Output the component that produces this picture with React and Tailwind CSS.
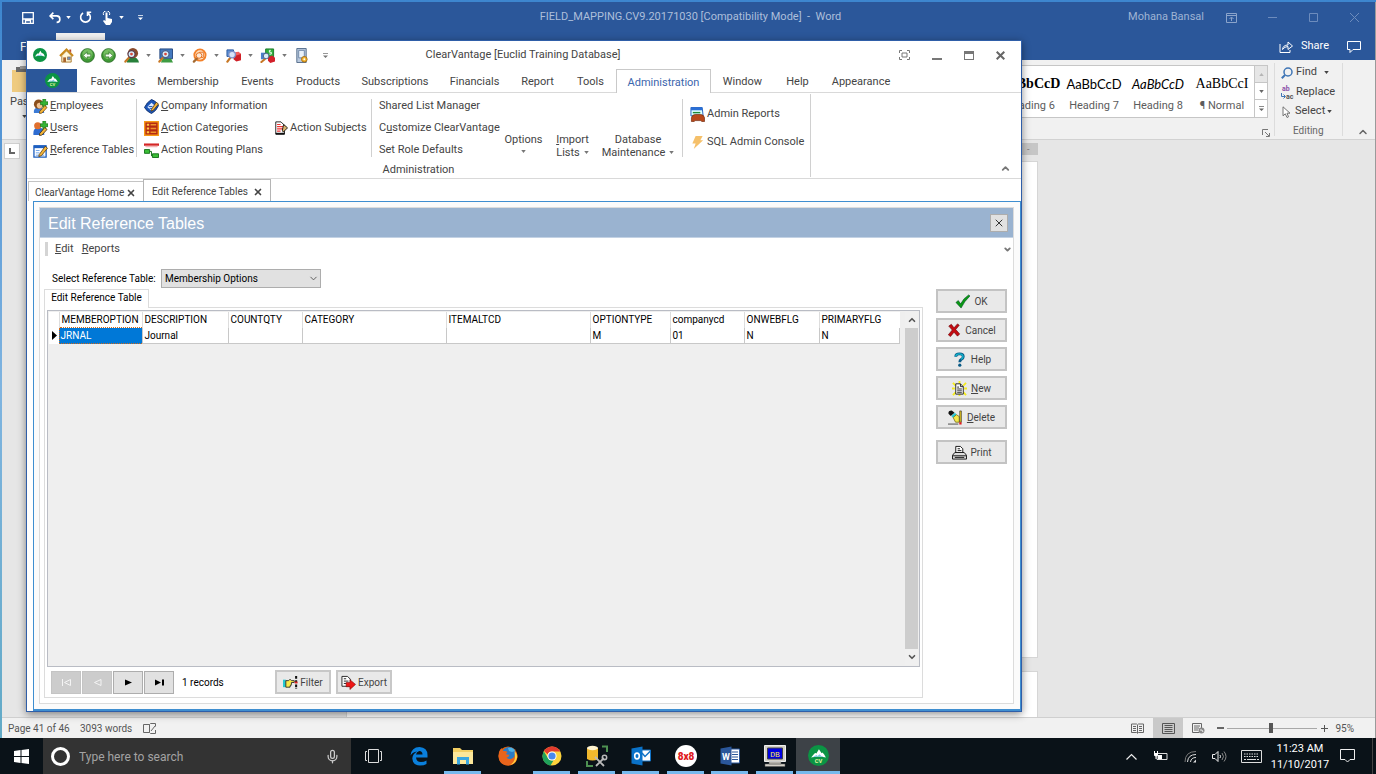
import React, { useState } from "react";
import clsx from "clsx";
import { ChevronDown, ChevronUp, Mic, X } from "lucide-react";

const ribbonTabs = [
  { label: "Favorites", width: "w-[66px]" },
  { label: "Membership", width: "w-[84px]" },
  { label: "Events", width: "w-[55px]" },
  { label: "Products", width: "w-[66px]" },
  { label: "Subscriptions", width: "w-[88px]" },
  { label: "Financials", width: "w-[71px]" },
  { label: "Report", width: "w-[55px]" },
  { label: "Tools", width: "w-[51px]" },
  { label: "Administration", width: "w-[95px]" },
  { label: "Window", width: "w-[63px]" },
  { label: "Help", width: "w-[47px]" },
  { label: "Appearance", width: "w-[80px]" },
];

const columns = [
  { name: "MEMBEROPTION", value: "JRNAL", width: "w-[83px]" },
  { name: "DESCRIPTION", value: "Journal", width: "w-[86px]" },
  { name: "COUNTQTY", value: "", width: "w-[74px]" },
  { name: "CATEGORY", value: "", width: "w-[144px]" },
  { name: "ITEMALTCD", value: "", width: "w-[144px]" },
  { name: "OPTIONTYPE", value: "M", width: "w-[80px]" },
  { name: "companycd", value: "01", width: "w-[74px]" },
  { name: "ONWEBFLG", value: "N", width: "w-[75px]" },
  { name: "PRIMARYFLG", value: "N", width: "w-[80px]" },
];

/* ---------- shared bits ---------- */

function Key({ text, at = 0 }) {
  return (
    <span>
      {text.slice(0, at)}
      <u>{text[at]}</u>
      {text.slice(at + 1)}
    </span>
  );
}

function Caret({ className }) {
  return (
    <svg viewBox="0 0 6 4" className={clsx("h-[3px] w-[5px] shrink-0 fill-current", className)}>
      <path d="M0 0h6L3 4z" />
    </svg>
  );
}

function BarCaret({ className }) {
  return (
    <svg viewBox="0 0 6 6" className={clsx("h-[5px] w-[5px] shrink-0 fill-current", className)}>
      <path d="M0 0h6v1H0zM0 3h6L3 6z" />
    </svg>
  );
}

function Svg({ children, className = "h-[15px] w-[15px]", box = "0 0 16 16" }) {
  return (
    <svg viewBox={box} className={clsx("shrink-0", className)} fill="none">
      {children}
    </svg>
  );
}

/* ---------- ClearVantage icons ---------- */

function CvLogo({ className, label }) {
  return (
    <Svg className={className} box="0 0 20 20">
      <circle cx="10" cy="10" r="10" fill="#0b9444" />
      <path d="M3 12Q6 7.500 7.200 7.500L8 8.200 10.400 4l2.600 3.800.8-.6Q15.500 8.500 17 12q-7-2-14 0z" fill="#fff" />
      <path d="M4.500 11.600 8 9.500l1.200 1L11 8.800l2 1.900 2.500.9q-5.500-1.200-11 0z" fill="#7cc7e8" />
      {label && (
        <text x="10" y="17.500" fontSize="5.500" fontWeight="700" textAnchor="middle" fill="#e8f5a0">
          CV
        </text>
      )}
    </Svg>
  );
}

const HomeIcon = () => (
  <Svg>
    <path d="M3 8v7h10V8L8 3z" fill="#fff8dc" stroke="#a9782b" />
    <path d="M1 8.500 8 1.500l7 7" stroke="#c98a1b" strokeWidth="2" />
    <path d="M11 1.500h2V5l-2-2z" fill="#b5452c" />
    <path d="M4.500 10h3v5h-3z" fill="#a8632a" />
    <path d="M9 9.500h3v3H9z" fill="#6e93c9" stroke="#845b24" strokeWidth=".6" />
  </Svg>
);

const ArrowBall = ({ flip }) => (
  <Svg>
    <circle cx="8" cy="8" r="7.300" fill="#3f9a35" stroke="#2c6e26" />
    <circle cx="8" cy="6.500" r="5.500" fill="#8ccd74" opacity=".7" />
    <path
      d={flip ? "M12.500 8 8.500 4v2.500H4.500v3h4V12z" : "M3.500 8l4-4v2.500h4v3h-4V12z"}
      fill="#f4fbf1"
      stroke="#2d7327"
      strokeWidth=".8"
    />
  </Svg>
);

const Lens = ({ ring = "#4b5f8a" }) => (
  <>
    <path d="M1.500 14.500 5.500 10" stroke="#c77724" strokeWidth="2.400" strokeLinecap="round" />
    <circle cx="8" cy="6.500" r="3.800" fill="#d8ecf8" stroke={ring} strokeWidth="1.300" />
  </>
);

const FindPerson = () => (
  <Svg>
    <path d="M3 15.500q0-6 6-6t7 6z" fill="#27803a" />
    <circle cx="9.500" cy="5.500" r="5.500" fill="#8a4a2b" />
    <Lens ring="#5a3a48" />
    <circle cx="8" cy="6.500" r="1.500" fill="#d9483b" />
  </Svg>
);

const FindScreen = () => (
  <Svg>
    <path d="M2 1h13.500v10.500H2z" fill="#4479bf" stroke="#23487e" />
    <path d="M5 11.500h9l2 4H3z" fill="#3e9c42" />
    <Lens />
    <circle cx="8" cy="6.500" r="1.500" fill="#d9483b" />
  </Svg>
);

const FindOrange = () => (
  <Svg>
    <circle cx="8.500" cy="7.500" r="7" fill="#f3812a" />
    <circle cx="8.500" cy="7.500" r="5" fill="#ffe3c4" />
    <path d="M8 4.500h4V10H8z" fill="#fff" stroke="#e36d1b" />
    <path d="M2 14.500 5.500 11" stroke="#a56a31" strokeWidth="2.400" strokeLinecap="round" />
    <circle cx="7.500" cy="8" r="3" fill="#fde9d6" stroke="#e36d1b" />
  </Svg>
);

const FindBoxes = () => (
  <Svg>
    <path d="M1 2h7v7H1z" fill="#5c8fd6" stroke="#2d5a9f" />
    <path d="M8 5.500l5-1.500 3 2.500V13l-5 1.500L8 12z" fill="#cf2027" />
    <path d="M8 5.500l5-1.500 3 2.500L11 8z" fill="#f0625f" />
    <path d="M1.500 14.500 4.500 10.500" stroke="#c77724" strokeWidth="2.400" strokeLinecap="round" />
    <circle cx="6.500" cy="7" r="3.500" fill="#d8e4f8" stroke="#7a90c8" strokeWidth="1.300" />
  </Svg>
);

const FindMoney = () => (
  <Svg>
    <path d="M6 1h8.500v8.500H6z" fill="#2fae3c" stroke="#1b7a29" />
    <path d="M11.500 2.500H10v2h2v2h-2" stroke="#fff" />
    <path d="M8.500 9.500 13 8l3 2.500v4L11 16l-2.500-2.500z" fill="#d3202a" />
    <path d="M1 5h5v7H1z" fill="#4a80cc" />
    <path d="M1.500 15 5 12" stroke="#c77724" strokeWidth="2.200" strokeLinecap="round" />
    <circle cx="6.500" cy="8.500" r="3" fill="#d8ecf8" stroke="#4b5f8a" />
  </Svg>
);

const ServerGear = () => (
  <Svg>
    <path d="M3 .5h10v15H3z" fill="#b9c9dd" stroke="#536b8a" />
    <path d="M5 2.500h6v8H5z" fill="#e9f1fa" stroke="#6f88a8" />
    <circle cx="11" cy="12" r="3" fill="#f2b431" stroke="#a86f12" />
    <circle cx="11" cy="12" r="1" fill="#fff" />
  </Svg>
);

const EmployeesIcon = () => (
  <Svg>
    <path d="M1 15q-1-6 5-6t6 6z" fill="#3c7bd6" />
    <circle cx="6" cy="5.500" r="5" fill="#8b4f1d" />
    <circle cx="7" cy="7" r="3" fill="#f2c391" />
    <path d="M10.500 0h3v3H16v3h-2.500v3h-3V6H8V3h2.500z" fill="#35b435" stroke="#187418" strokeWidth=".7" />
    <path d="M7 13.500 12.500 7 15 9l-5.500 6L7 15.500z" fill="#f4b53a" stroke="#6b430d" strokeWidth=".8" />
  </Svg>
);

const UsersIcon = () => (
  <Svg>
    <path d="M.5 15q-1-8 5.500-8t6 8z" fill="#2e6cd1" />
    <circle cx="5" cy="5" r="3.800" fill="#e0702f" />
    <path d="M10.500 0h3v3H16v3h-2.500v3h-3V6H8V3h2.500z" fill="#35b435" stroke="#187418" strokeWidth=".7" />
    <path d="M7 13.500 12.500 7 15 9l-5.500 6L7 15.500z" fill="#f4b53a" stroke="#38240a" strokeWidth=".8" />
  </Svg>
);

const RefTableIcon = () => (
  <Svg>
    <path d="M1 3h13v12H1z" fill="#fff" stroke="#1d5fc0" strokeWidth="1.400" />
    <path d="M1 2.500h13v3H1z" fill="#1d5fc0" />
    <path d="M3 8h4M3 10.500h4M3 13h4M9 13h3" stroke="#6aa0e6" />
    <path d="M6.500 12.500 13 3.500l2.500 2-6.500 8-2.800 1z" fill="#f4b53a" stroke="#4e3510" strokeWidth=".8" />
  </Svg>
);

const CompanyIcon = () => (
  <Svg>
    <path d="M8 .5Q13 2 15.500 7 13 13 8 15.500 3 13.500.5 9 3 3.500 8 .5z" fill="#1c56b8" stroke="#0d2e6e" />
    <path d="M3.500 8.500 8 4l4 3.500-4 5z" fill="#dbe9ff" />
    <path d="M5 8h4M6 10h3" stroke="#1c56b8" />
    <path d="M8 11 13 3.500l2.500 1.800L10 12l-2.500 1z" fill="#f4b53a" stroke="#4e3510" strokeWidth=".8" />
  </Svg>
);

const CategoriesIcon = () => (
  <Svg>
    <path d="M.7.7h14.600v14.600H.7z" fill="#b52a12" stroke="#f79a17" strokeWidth="1.600" />
    <path d="M3 4h2.500M3 8h2.500M3 12h2.500" stroke="#ffc845" strokeWidth="2" />
    <path d="M7 4h6M7 8h6M7 12h6" stroke="#f0922b" strokeWidth="1.600" />
  </Svg>
);

const RoutingIcon = () => (
  <Svg>
    <path d="M0 .5h16v2.500H0z" fill="#d42626" />
    <path d="M1 3h14l-1 1.500H2z" fill="#f3b5b5" />
    <path d="M.5 7h5.500v4H.5z" fill="#3bbf37" stroke="#14701a" />
    <path d="M9 11.500h6.500v4H9z" fill="#3bbf37" stroke="#14701a" />
    <path d="M6 9h2v5" stroke="#14701a" />
  </Svg>
);

const SubjectsIcon = () => (
  <Svg className="h-[14px] w-[14px]">
    <path d="M2 1h6l4 4v10H2z" fill="#fff" stroke="#111" />
    <path d="M3.500 4h4M3.500 6.500h7M3.500 9h7M3.500 11.500h4" stroke="#e33" strokeWidth="1.300" />
    <path d="M2 14.500h10" stroke="#111" strokeWidth="2" />
    <path d="M9.500 10.500 11 4l4.500 3.800-5 5z" fill="#d8b26c" stroke="#111" />
  </Svg>
);

const ReportsIcon = () => (
  <Svg>
    <path d="M1 .5h12l1 9H1z" fill="#dff" stroke="#1d5fc0" />
    <path d="M1 .5h12v3H1z" fill="#2a6fd6" />
    <path d="M3 6h8" stroke="#1e8a3a" strokeWidth="1.500" />
    <path d="M1.500 11.500Q2.500 8 5.500 8h6q3 0 4 3.500v4h-3l-1-1h-6l-1 1h-3z" fill="#b8481a" stroke="#6e260a" strokeWidth=".7" />
  </Svg>
);

const BoltIcon = () => (
  <Svg>
    <path d="M6 1h7.500L11 5.500h3L4 15l2-6H2.500z" fill="#f5c06a" />
  </Svg>
);

const CheckIcon = () => (
  <Svg>
    <path d="M1 9l2.500-2L6 10.500Q9 4.500 14.500 1L16 2Q10 7.500 6.500 15z" fill="#0a9a12" stroke="#064f2a" strokeWidth=".6" />
  </Svg>
);

const CrossIcon = () => (
  <Svg className="h-[14px] w-[14px]">
    <path d="M2 3.500 5 1.500l3 4L12 1l2 1.500-4 5 4.500 5L12 15l-4-4.500L4 15.500l-2.500-2L6 8z" fill="#c40a10" stroke="#6b070a" strokeWidth=".7" />
  </Svg>
);

const QuestionIcon = () => (
  <Svg>
    <path d="M4 5q0-3 4-3t4 3q0 2-2.200 3Q8.300 8.800 8.300 11" stroke="#0a5a86" strokeWidth="3" />
    <path d="M4 4.800Q4.200 2 7.800 2t4 3q0 1.800-2 2.800" stroke="#14b4cc" strokeWidth="1.500" />
    <circle cx="8.300" cy="14" r="1.700" fill="#0a5a86" />
  </Svg>
);

const NewDocIcon = () => (
  <Svg>
    <path d="M1 2l3 3M8 0v3M15 2l-3 3M0 8h3M13 8h3M1 15l3-3M15 15l-3-3M8 13v3" stroke="#f5ec1d" strokeWidth="2" />
    <path d="M4 3h5l3 3v8H4z" fill="#fff" stroke="#222" />
    <path d="M9 3v3h3M5.500 6.500h2M5.500 8.500h5M5.500 10.500h5M5.500 12.500h5" stroke="#222" />
  </Svg>
);

const EraserIcon = () => (
  <Svg>
    <path d="M.5 4Q0 .5 4 .5L7 3 3 6.500z" fill="#111" />
    <path d="M3.500 6.500 7.500 3 9 5 5.500 8.500z" fill="#28c8d8" />
    <path d="M5.500 8 9 5l3 2v6H8z" fill="#f4e84a" stroke="#6d6410" strokeWidth=".8" />
    <path d="M12.500 1h1.800v12h-1.800z" fill="#e6c81e" stroke="#222" strokeWidth=".6" />
    <path d="M12 13h2.500v2.500H12z" fill="#e02020" />
    <path d="M0 15h11" stroke="#444" />
  </Svg>
);

const PrinterIcon = () => (
  <Svg>
    <path d="M4 8V1.500h5L11.500 4v4" fill="#fff" stroke="#111" />
    <path d="M6 4h2.500M6 6h4" stroke="#111" />
    <path d="M3 8h10l2.500 3v4H.5v-4z" fill="#ddd" stroke="#111" />
    <path d="M.5 11.500h15M3 13.200h10" stroke="#111" />
  </Svg>
);

const FilterIcon = () => (
  <Svg>
    <path d="M0 5h3v8H0z" fill="#23c8d2" />
    <path d="M3 6h3l1.500-1.500L9 6h3v2H9v2H8.500v1.500H7.500V13H3z" fill="#f8ea4a" stroke="#222" strokeWidth=".9" />
    <path d="M14 1v14" stroke="#111" strokeWidth="2.200" strokeDasharray="3 1.500" />
    <path d="M12.500 7h3v2h-3z" fill="#e02020" />
  </Svg>
);

const ExportIcon = () => (
  <Svg>
    <path d="M1 1.500h6l3 3V12H1z" fill="#fff" stroke="#222" />
    <path d="M3 4h2.500M3 6.500h5M3 9h3" stroke="#222" />
    <path d="M5.500 8h4V5l6 5-6 5.500v-3h-4z" fill="#ee1616" stroke="#7a0808" strokeWidth=".6" />
  </Svg>
);

/* ---------- Word window ---------- */

function WordTitleBar() {
  return (
    <header className="flex h-[31px] items-center bg-[#2b579a] text-white">
      <div className="flex flex-1 items-center pl-5">
        <button aria-label="Save">
          <Svg className="h-3 w-3" box="0 0 12 12">
            <path d="M.7.7h10.600v10.600H.7zM1 7h10M3.500 11V8.500h5V11" stroke="#fff" strokeWidth="1.300" />
          </Svg>
        </button>
        <button aria-label="Undo" className="ml-3.5 flex items-center gap-1">
          <Svg className="h-[13px] w-[14px]">
            <path d="M6 2 2 6l4 4M2.500 6H10q4 .2 4 4t-4 4" stroke="#fff" strokeWidth="2" />
          </Svg>
          <Caret />
        </button>
        <button aria-label="Repeat" className="ml-2">
          <Svg className="h-[13px] w-[13px]">
            <path d="M5 2.500a6 6 0 1 0 6 0M15 1.500h-4.500V6" stroke="#fff" strokeWidth="2" />
          </Svg>
        </button>
        <button aria-label="Touch mode" className="ml-2.5 flex items-center gap-1.5">
          <Svg className="h-[14px] w-[11px]" box="0 0 11 14">
            <path d="M3.500 1.500h2v5.500l4.500 1v3L8 14H4L1 10l1-1 1.500 1z" fill="#fff" />
            <path d="M1.500 4a3.200 3.200 0 1 1 6 0" stroke="#fff" />
          </Svg>
          <Caret />
        </button>
        <button aria-label="Customize" className="ml-3.5">
          <BarCaret />
        </button>
      </div>
      <h1 className="text-[11px] whitespace-pre text-[#adbfdb]">FIELD_MAPPING.CV9.20171030 [Compatibility Mode]  -  Word</h1>
      <div className="flex flex-1 items-center justify-end pr-4 text-[#9fb4d4]">
        <span className="text-[11px]">Mohana Bansal</span>
        <Svg className="ml-[22px] h-[10px] w-[11px]" box="0 0 11 10">
          <path d="M.5.5h10v9H.5zM.5 2.500h10M5.500 8V4.500M3.500 6l2-2 2 2" stroke="#8ba4cb" />
        </Svg>
        <Svg className="ml-[31px] h-[10px] w-[9px]" box="0 0 9 10">
          <path d="M0 4.500h9" stroke="#6d8cbd" />
        </Svg>
        <Svg className="ml-8 h-[9px] w-[9px]" box="0 0 9 9">
          <path d="M.5.500h8v8h-8z" stroke="#6d8cbd" />
        </Svg>
        <Svg className="ml-8 h-[9px] w-[9px]" box="0 0 9 9">
          <path d="M0 0l9 9M9 0 0 9" stroke="#6d8cbd" />
        </Svg>
      </div>
    </header>
  );
}

function WordTabRow() {
  return (
    <div className="flex h-[27px] items-stretch bg-[#2b579a] text-xs text-white">
      <button className="w-[54px] pl-[18px] text-left">File</button>
      <div className="w-[49px] bg-[#f1f1f1]" />
      <div className="ml-auto flex items-center pr-3.5">
        <button className="flex items-center gap-2 text-[11px]">
          <Svg className="h-3 w-[14px]" box="0 0 14 12">
            <path d="M1 3v8.500h10V9M3.500 8.500Q4 4 9 4V1l4.500 4L9 8.500v-3Q5.500 5.500 3.500 8.500z" stroke="#fff" />
          </Svg>
          Share
        </button>
        <button aria-label="Comments" className="ml-[18px]">
          <Svg className="h-3 w-[14px]" box="0 0 14 12">
            <path d="M.5.5h13v8H6l-3 3v-3H.5z" stroke="#fff" />
          </Svg>
        </button>
      </div>
    </div>
  );
}

function StyleItem({ name, sample }) {
  return (
    <button className="flex w-16 flex-col items-center justify-center gap-1.5 overflow-hidden pt-1.5 text-[11px] leading-4 whitespace-nowrap text-[#5c5c5c]">
      {sample}
      <span>{name}</span>
    </button>
  );
}

function WordRibbon() {
  return (
    <div className="flex h-20 justify-between border-b border-[#d2d2d2] bg-[#f1f1f1] text-[11px] text-[#444]">
      <button className="flex w-12 flex-col items-center pt-1.5 pr-1">
        <Svg className="h-[26px] w-[26px]" box="0 0 26 26">
          <path d="M1 4h24v22H1z" fill="#efcb80" />
          <path d="M5 1h16v5H5z" fill="#6b6b6b" />
          <path d="M9 0h8v3H9z" fill="#999" />
        </Svg>
        <span className="mt-0.5">Paste</span>
        <Caret className="mt-1" />
      </button>
      <div className="flex">
        <div className="flex pt-[5px]">
          <div className="flex h-[53px] border border-[#c6c6c6] bg-white">
            <StyleItem name="Heading 6" sample={<b className="font-['Liberation_Serif',serif] text-sm leading-4 text-black">AaBbCcD</b>} />
            <StyleItem name="Heading 7" sample={<span className="font-[Lato,sans-serif] text-[13px] leading-4 text-black">AaBbCcD</span>} />
            <StyleItem name="Heading 8" sample={<i className="font-[Lato,sans-serif] text-[13px] leading-4 text-black">AaBbCcD</i>} />
            <StyleItem name="¶ Normal" sample={<span className="font-['Liberation_Serif',serif] text-sm leading-4 text-black">AaBbCcI</span>} />
            <div className="grid w-[13px] grid-rows-3 divide-y divide-[#c6c6c6] border-l border-[#c6c6c6] text-[#666]">
              <button aria-label="Row up" className="flex items-center justify-center bg-[#e6e6e6] text-[#b5b5b5]">
                <Caret className="rotate-180" />
              </button>
              <button aria-label="Row down" className="flex items-center justify-center">
                <Caret />
              </button>
              <button aria-label="More styles" className="flex items-center justify-center">
                <BarCaret />
              </button>
            </div>
          </div>
        </div>
        <div className="flex items-end pr-1 pb-0.5">
          <Svg className="-ml-1.5 h-2 w-2" box="0 0 8 8">
            <path d="M.5 6V.5H6M3 3l4 4M7.500 4v3.500H4" stroke="#777" />
          </Svg>
        </div>
        <div className="my-[3px] flex w-[69px] flex-col border-x border-[#dcdcdc] pl-1.5">
          <button className="flex h-[19px] shrink-0 items-center gap-[3px]">
            <Svg className="h-3 w-3" box="0 0 12 12">
              <circle cx="7" cy="5" r="4" stroke="#3f75b5" strokeWidth="1.500" />
              <path d="M.8 11.200 4 8" stroke="#3f75b5" strokeWidth="2" />
            </Svg>
            Find
            <Caret className="ml-1" />
          </button>
          <button className="flex h-5 shrink-0 items-center gap-px">
            <Svg className="h-[18px] w-[14px]" box="0 0 14 18">
              <text x="1" y="8" fontSize="7" fontWeight="700" fill="#8a4fa8">ab</text>
              <text x="5" y="16" fontSize="7" fontWeight="700" fill="#555">ac</text>
              <path d="M.5 10v3.500H4M2.500 11.500l2 2-2 2" stroke="#3f75b5" />
            </Svg>
            Replace
          </button>
          <button className="flex h-[19px] shrink-0 items-center gap-1">
            <Svg className="ml-px h-3 w-[9px]" box="0 0 9 12">
              <path d="M1 .8v9l2.300-2L5 11.500l1.500-.7L5 7.200h3z" fill="#fff" stroke="#666" strokeWidth=".9" />
            </Svg>
            Select
            <Caret className="-ml-0.5" />
          </button>
          <span className="mt-auto pl-3 text-[10px] leading-[10px] text-[#666]">Editing</span>
        </div>
        <button aria-label="Collapse the ribbon" className="flex w-8 items-end justify-end pr-1.5 pb-px">
          <ChevronUp className="h-3 w-3 text-[#666]" strokeWidth={3} />
        </button>
      </div>
    </div>
  );
}

function WordDocument() {
  return (
    <div className="flex min-h-0 flex-1 bg-[#e6e6e6] pt-[3px] pl-0.5">
      <div className="flex h-4 w-4 items-end justify-end border border-[#cfcfcf] bg-white p-1">
        <div className="h-1.5 w-1.5 border-b-2 border-l-2 border-[#666]" />
      </div>
      <div className="flex flex-1 flex-col items-center pr-3">
        <div className="flex min-h-0 w-[692px] flex-1 flex-col">
          <div className="h-3 shrink-0 bg-[#c6c6c6] pr-2 text-right text-[9px] leading-3 text-[#777]">-</div>
          <div className="mt-[6px] flex-1 border border-[#d6d6d6] bg-white" />
          <div className="mt-[13px] h-[46px] border border-b-0 border-[#d6d6d6] bg-white" />
        </div>
      </div>
    </div>
  );
}

function WordStatusBar() {
  return (
    <footer className="flex h-[21px] items-center border-t border-[#cfcfcf] bg-[#f1f1f1] pl-1.5 text-[10px] text-[#555]">
      <span className="w-[72px]">Page 41 of 46</span>
      <span className="w-[63px]">3093 words</span>
      <Svg className="h-[11px] w-[13px]" box="0 0 13 11">
        <path d="M6.500 1.500H.5v8h6v-8l1-1h5v3M6.500 9.500l1 1h5V7M8 8l4-5" stroke="#666" />
      </Svg>
      <div className="ml-auto flex h-full items-center pr-[21px]">
        <button aria-label="Read mode" className="mr-[9px]">
          <Svg className="h-[11px] w-[13px]" box="0 0 13 11">
            <path d="M.5 1h5l1 .8 1-.8h5v8.500h-5l-1 .8-1-.8h-5zM6.500 2v8M2 3.500h3M2 5.500h3M2 7.500h3M8 3.500h3M8 5.500h3M8 7.500h3" stroke="#666" />
          </Svg>
        </button>
        <button aria-label="Print layout" className="flex h-full w-[30px] items-center justify-center bg-[#c9c9c9]">
          <Svg className="h-[11px] w-[13px]" box="0 0 13 11">
            <path d="M.5.500h12v10H.5zM2.500 2.500h8M2.500 4.500h8M2.500 6.500h8M2.500 8.500h8" stroke="#555" />
          </Svg>
        </button>
        <button aria-label="Web layout" className="mr-2 ml-[9px]">
          <Svg className="h-[11px] w-[13px]" box="0 0 13 11">
            <path d="M7 9.500H.5v-9h9V5M2 3h6M2 5h5M2 7h4" stroke="#666" />
            <circle cx="9.500" cy="7.500" r="3" fill="#888" />
            <path d="M8 7h2l1 2" stroke="#eee" />
          </Svg>
        </button>
        <button aria-label="Zoom out" className="flex w-[14px] justify-center">
          <span className="h-0.5 w-[7px] bg-[#666]" />
        </button>
        <input
          type="range"
          aria-label="Zoom"
          defaultValue="48"
          className="h-[11px] w-[90px] appearance-none bg-[linear-gradient(#a8a8a8,#a8a8a8)] bg-[length:100%_1px] bg-center bg-no-repeat [&::-webkit-slider-thumb]:h-[10px] [&::-webkit-slider-thumb]:w-1 [&::-webkit-slider-thumb]:appearance-none [&::-webkit-slider-thumb]:bg-[#555]"
        />
        <button aria-label="Zoom in" className="flex w-[14px] justify-center">
          <Svg className="h-[7px] w-[7px]" box="0 0 7 7">
            <path d="M3.500 0v7M0 3.500h7" stroke="#555" />
          </Svg>
        </button>
        <span className="ml-1">95%</span>
      </div>
    </footer>
  );
}

/* ---------- ClearVantage window ---------- */

const quickFinders = [
  { label: "Find person", icon: FindPerson },
  { label: "Find screen", icon: FindScreen },
  { label: "Find event", icon: FindOrange },
  { label: "Find product", icon: FindBoxes },
  { label: "Find payment", icon: FindMoney },
];

function CvTitleBar() {
  return (
    <div className="flex h-7 items-center pl-1.5 text-[#777]">
      <div className="flex flex-1 items-center">
        <CvLogo className="h-[14px] w-[14px]" />
        <button aria-label="Home" className="ml-3">
          <HomeIcon />
        </button>
        <button aria-label="Back" className="ml-1.5">
          <ArrowBall />
        </button>
        <button aria-label="Forward" className="mr-2 ml-1.5">
          <ArrowBall flip />
        </button>
        {quickFinders.map(({ label, icon: Icon }) => (
          <button key={label} aria-label={label} className="flex w-[34px] items-center gap-[7px]">
            <Icon />
            <Caret />
          </button>
        ))}
        <button aria-label="Server options">
          <ServerGear />
        </button>
        <button aria-label="Customize toolbar" className="ml-3.5">
          <BarCaret />
        </button>
      </div>
      <h2 className="ml-2 text-[11px] text-[#444]">ClearVantage [Euclid Training Database]</h2>
      <div className="flex flex-1 items-center justify-end gap-[22px] pr-4">
        <button aria-label="Full screen">
          <Svg className="h-[10px] w-[11px]" box="0 0 11 10">
            <path d="M.5 3V.5H3M8 .5h2.500V3M10.500 7v2.500H8M3 9.500H.5V7M3 3h5v4H3z" stroke="#777" />
          </Svg>
        </button>
        <button aria-label="Minimize" className="flex h-[9px] w-[10px] items-end">
          <span className="h-0.5 w-full bg-[#777]" />
        </button>
        <button aria-label="Maximize">
          <div className="h-[9px] w-[10px] border border-t-[3px] border-[#777]" />
        </button>
        <button aria-label="Close">
          <Svg className="h-[9px] w-[9px]" box="0 0 9 9">
            <path d="M.7.7l7.600 7.600M8.300.7.7 8.300" stroke="#666" strokeWidth="2" />
          </Svg>
        </button>
      </div>
    </div>
  );
}

function CvRibbonTabs() {
  return (
    <nav className="flex h-6 border-b border-[#d9d9d9] text-[11px] text-[#444]">
      <button aria-label="Application menu" className="mr-[3px] flex w-[50px] items-center justify-center bg-[#2b579a]">
        <CvLogo className="h-[15px] w-[15px]" label />
      </button>
      {ribbonTabs.map(({ label, width }) => (
        <button
          key={label}
          className={clsx(
            "flex items-center justify-center pt-1 whitespace-nowrap",
            width,
            label === "Administration" && "-mb-px border border-b-0 border-[#c9c9c9] bg-white text-[#3b66ad]"
          )}
        >
          {label}
        </button>
      ))}
    </nav>
  );
}

function RibbonItem({ icon: Icon, children }) {
  return (
    <button className="flex h-[22px] items-center gap-0.5 whitespace-nowrap">
      {Icon && <Icon />}
      {children}
    </button>
  );
}

function CvRibbon() {
  return (
    <div className="flex h-[86px] border-b border-[#d9d9d9] text-[11px] text-[#444]">
      <div className="my-px flex w-[784px] flex-col border-r border-[#d0d0d0] pt-px">
        <div className="flex h-[66px] items-stretch">
          <div className="flex w-[103px] flex-col pl-1.5">
            <RibbonItem icon={EmployeesIcon}><Key text="Employees" /></RibbonItem>
            <RibbonItem icon={UsersIcon}><Key text="Users" /></RibbonItem>
            <RibbonItem icon={RefTableIcon}><Key text="Reference Tables" /></RibbonItem>
          </div>
          <div className="my-1 ml-1.5 w-px bg-[#d0d0d0]" />
          <div className="flex w-[137px] flex-col pl-[7px]">
            <RibbonItem icon={CompanyIcon}><Key text="Company Information" /></RibbonItem>
            <RibbonItem icon={CategoriesIcon}><Key text="Action Categories" /></RibbonItem>
            <RibbonItem icon={RoutingIcon}>Action Routing Plans</RibbonItem>
          </div>
          <div className="flex w-[97px] flex-col justify-center">
            <RibbonItem icon={SubjectsIcon}>Action Subjects</RibbonItem>
          </div>
          <div className="my-1 w-px bg-[#d0d0d0]" />
          <div className="flex w-[124px] flex-col pl-[7px]">
            <RibbonItem>Shared List Manager</RibbonItem>
            <RibbonItem><Key text="Customize ClearVantage" at={1} /></RibbonItem>
            <RibbonItem>Set Role Defaults</RibbonItem>
          </div>
          <button className="flex w-[55px] flex-col items-center pt-[38px] leading-[13px]">
            Options
            <Caret className="mt-1 text-[#777]" />
          </button>
          <button className="flex w-[43px] flex-col items-center pt-[38px] leading-[13px]">
            <Key text="Import" />
            <span className="flex items-center justify-center gap-1">
              Lists <Caret className="text-[#777]" />
            </span>
          </button>
          <button className="flex w-[88px] flex-col items-center pt-[38px] leading-[13px]">
            Database
            <span className="flex items-center justify-center gap-1">
              Maintenance <Caret className="text-[#777]" />
            </span>
          </button>
          <div className="my-1 w-px bg-[#d0d0d0]" />
          <div className="flex flex-col gap-1.5 pt-2 pl-[7px]">
            <RibbonItem icon={ReportsIcon}>Admin Reports</RibbonItem>
            <RibbonItem icon={BoltIcon}>SQL Admin Console</RibbonItem>
          </div>
        </div>
        <div className="text-center leading-[17px]">Administration</div>
      </div>
      <button aria-label="Collapse" className="ml-auto flex items-end pr-2.5 pb-1">
        <ChevronUp className="h-[11px] w-[11px] text-[#777]" strokeWidth={4} />
      </button>
    </div>
  );
}

function CvDocTabs() {
  return (
    <div className="flex h-[22px] items-end px-px text-[10px] whitespace-nowrap text-[#444]">
      <div className="flex h-[20px] w-[115px] items-center justify-between border border-r-0 border-b-0 border-[#c4c4c4] pt-0.5 pr-[7px] pl-1.5">
        <button>ClearVantage Home</button>
        <button aria-label="Close ClearVantage Home">
          <X className="h-[10px] w-[10px]" strokeWidth={4} />
        </button>
      </div>
      <div className="flex h-full w-[128px] items-center justify-between border border-b-0 border-[#b5b5b5] bg-white pt-0.5 pr-[7px] pl-[8px]">
        <button>Edit Reference Tables</button>
        <button aria-label="Close Edit Reference Tables">
          <X className="h-[10px] w-[10px]" strokeWidth={4} />
        </button>
      </div>
    </div>
  );
}

function ReferenceGrid() {
  return (
    <div className="flex min-h-0 flex-1 border border-[#b9bcc4] bg-[#efefef] p-px">
      <div className="min-w-0 flex-1 overflow-hidden">
        <table className="w-[850px] table-fixed border-collapse bg-white text-left text-[10px] leading-[15px] text-black">
          <thead>
            <tr>
              <th aria-label="Current row" className="w-[10px] p-0" />
              {columns.map(({ name, width }) => (
                <th key={name} className={clsx("border-l border-[#ddd] p-0 pl-0.5 font-normal whitespace-nowrap", width)}>
                  {name}
                </th>
              ))}
            </tr>
          </thead>
          <tbody>
            <tr className="h-4">
              <td className="p-0 pl-[3px]">
                <svg viewBox="0 0 5 9" className="h-[9px] w-[5px]">
                  <path d="M0 0l5 4.500L0 9z" />
                </svg>
              </td>
              {columns.map(({ name, value }, i) => (
                <td
                  key={name}
                  className={clsx(
                    "p-0 whitespace-nowrap",
                    i === 0 ? "border border-dotted border-[#d06a1c] bg-[#0078d7] pl-px text-white" : "border-x border-b border-[#c8c8c8] pl-0.5"
                  )}
                >
                  {value}
                </td>
              ))}
            </tr>
          </tbody>
        </table>
      </div>
      <div className="flex w-[13px] flex-col bg-[#cdcdcd]">
        <button aria-label="Scroll up" className="flex h-4 items-center justify-center bg-[#f0f0f0]">
          <ChevronUp className="h-[10px] w-[10px] text-[#555]" strokeWidth={4} />
        </button>
        <button aria-label="Scroll down" className="mt-auto flex h-4 items-center justify-center bg-[#f0f0f0]">
          <ChevronDown className="h-[10px] w-[10px] text-[#555]" strokeWidth={4} />
        </button>
      </div>
    </div>
  );
}

function NavButton({ label, disabled, children }) {
  return (
    <button
      aria-label={label}
      disabled={disabled}
      className={clsx(
        "flex h-[23px] w-[30px] items-center justify-center border",
        disabled ? "border-[#c4c4c4] bg-[#cccccc]" : "border-[#adadad] bg-[#e1e1e1]"
      )}
    >
      <Svg className="h-[7px] w-[11px]" box="0 0 11 7">
        {children}
      </Svg>
    </button>
  );
}

function RecordBar() {
  return (
    <div className="flex h-[30px] items-center pl-1 text-[10px] text-black">
      <div className="flex gap-px">
        <NavButton label="First" disabled>
          <path d="M1.500 0v7M9.500.500v6L3.500 3.500z" stroke="#f4f4f4" />
        </NavButton>
        <NavButton label="Previous" disabled>
          <path d="M9 .5v6L2.500 3.500z" stroke="#f4f4f4" />
        </NavButton>
        <NavButton label="Next">
          <path d="M2 0.500l7 3L2 6.500z" fill="#000" />
        </NavButton>
        <NavButton label="Last">
          <path d="M1 .5l6 3-6 3zM8 .5h2v6H8z" fill="#000" />
        </NavButton>
      </div>
      <span className="w-[101px] pl-2">1 records</span>
      <button className="flex h-6 w-14 items-center justify-center gap-0.5 border-2 border-[#c8c8c8] bg-[#e9e9e9] text-[#444]">
        <FilterIcon />
        Filter
      </button>
      <button className="ml-[5px] flex h-6 w-14 items-center justify-center gap-0.5 border-2 border-[#c8c8c8] bg-[#e9e9e9] text-[#444]">
        <ExportIcon />
        Export
      </button>
    </div>
  );
}

const actions = [
  { label: "OK", icon: CheckIcon, plain: true },
  { label: "Cancel", icon: CrossIcon, plain: true },
  { label: "Help", icon: QuestionIcon, plain: true },
  { label: "New", icon: NewDocIcon },
  { label: "Delete", icon: EraserIcon },
  { label: "Print", icon: PrinterIcon, plain: true, className: "mt-1.5" },
];

function ActionButtons() {
  return (
    <div className="flex w-[77px] flex-col gap-[5px] text-[10px] text-[#444]">
      {actions.map(({ label, icon: Icon, plain, className }) => (
        <button
          key={label}
          className={clsx(
            "flex h-6 w-[71px] items-center justify-center gap-1 border-2 border-[#c3c3c3] bg-[#e9e9e9]",
            className
          )}
        >
          <Icon />
          {plain ? label : <Key text={label} />}
        </button>
      ))}
    </div>
  );
}

function EditReferenceTables() {
  const [tableName, setTableName] = useState("Membership Options");

  return (
    <section className="flex min-h-0 flex-1 flex-col border border-[#dcdcdc] bg-white">
      <div className="flex h-[30px] items-center justify-between border-b border-[#c3d2e4] bg-[#9ab3d0] pr-[5px] pl-2">
        <h3 className="pt-[3px] font-['Liberation_Sans',sans-serif] text-base text-white">Edit Reference Tables</h3>
        <button aria-label="Close panel" className="flex h-[18px] w-[18px] items-center justify-center border border-[#adadad] bg-[#e1e1e1]">
          <X className="h-3 w-3 text-[#333]" strokeWidth={2} />
        </button>
      </div>
      <div className="flex h-[22px] items-center pr-px pl-[5px] text-[11px] text-[#444]">
        <div className="h-[14px] w-[3px] bg-[#d4d4d4]" />
        <button className="ml-[7px]">
          <Key text="Edit" />
        </button>
        <button className="ml-2">
          <Key text="Reports" />
        </button>
        <ChevronDown className="ml-auto h-[9px] w-[9px] text-[#777]" strokeWidth={5} />
      </div>
      <div className="mt-[9px] flex h-[19px] items-center pl-3 text-[10px] text-black">
        <label htmlFor="ref-table" className="w-[109px]">
          Select Reference Table:
        </label>
        <div className="relative">
          <select
            id="ref-table"
            value={tableName}
            onChange={(e) => setTableName(e.target.value)}
            className="block h-[19px] w-[160px] appearance-none border border-[#adadad] bg-[#e1e1e1] pl-[3px]"
          >
            <option>Membership Options</option>
          </select>
          <ChevronDown className="pointer-events-none absolute top-1 right-0.5 h-[11px] w-[11px] text-[#555]" />
        </div>
      </div>
      <div className="mt-px flex min-h-0 flex-1 pb-[5px] pl-1">
        <div className="flex min-w-0 flex-1 flex-col">
          <button className="z-10 -mb-px h-[19px] w-[105px] border border-b-0 border-[#dcdcdc] bg-white pb-[3px] text-[10px] text-black">
            Edit Reference Table
          </button>
          <div className="flex min-h-0 flex-1 flex-col border border-[#dcdcdc] px-[2px] pt-0.5">
            <ReferenceGrid />
            <RecordBar />
          </div>
        </div>
        <div className="pl-[13px]">
          <ActionButtons />
        </div>
      </div>
    </section>
  );
}

function ClearVantageWindow() {
  return (
    <div className="absolute top-10 right-[354px] bottom-[62px] left-[26px] flex flex-col border border-[#2f5ea8] bg-white shadow-[0_2px_8px_rgba(0,0,0,0.45)]">
      <CvTitleBar />
      <CvRibbonTabs />
      <CvRibbon />
      <CvDocTabs />
      <div className="ml-1.5 flex min-h-0 flex-1 flex-col border-t border-r border-b-2 border-l border-[#3f8ed0] bg-[#fbfbfb] py-[5px] pr-1.5 pl-[5px]">
        <EditReferenceTables />
      </div>
    </div>
  );
}

/* ---------- taskbar ---------- */

const EdgeIcon = () => (
  <Svg className="h-5 w-5" box="0 0 20 20">
    <path d="M1.500 9.500Q2.500 1 10.500 1 18.500 1.500 18.500 9v2.500H7Q7.500 16 12 16q3 0 5.500-1.500v3.500Q15 19.500 11 19.500 3.500 19 3.300 12.500 3.500 8 8 5.500 3.500 6 1.500 9.500zM7 8.500h6.500Q13.500 5 10.300 5 7.500 5.500 7 8.500z" fill="#0a7fdc" />
  </Svg>
);

const ExplorerIcon = () => (
  <Svg className="h-[18px] w-5" box="0 0 20 18">
    <path d="M0 1h7l2 2h11v14H0z" fill="#f3cf63" />
    <path d="M0 5h20v12H0z" fill="#fce79a" />
    <path d="M4 10h12v7.500h-3V13H7v4.500H4z" fill="#3ba7e0" />
  </Svg>
);

const FirefoxIcon = () => (
  <Svg className="h-5 w-5" box="0 0 20 20">
    <circle cx="10" cy="10" r="9.500" fill="#e66000" />
    <circle cx="11" cy="8" r="7" fill="#2a7cc7" />
    <path d="M10 2q5-1 7 3l-3 1-3-1z" fill="#4db3e6" />
    <path d="M1 6Q2 3 4 2q0 2 1 3 3-.5 4.500 1L8 8q1.500 1 3.500.5Q11 11 8.500 11.500 11 14 14 12.500 17.500 11 17 5q3 3 2.300 7-1.300 7-9.300 7.500Q1 19 .5 10z" fill="#e8641c" />
    <path d="M16.500 5q3 3 2.500 7-1.500 6-7 7 5-3 5-8z" fill="#ffd23e" />
  </Svg>
);

const ChromeIcon = () => (
  <Svg className="h-5 w-5" box="0 0 20 20">
    <circle cx="10" cy="10" r="9.500" fill="#fdd23c" />
    <path d="M10 .5a9.500 9.500 0 0 1 8.300 5H10a4.500 4.500 0 0 0-4.200 3L2 5A9.500 9.500 0 0 1 10 .5z" fill="#e33b2e" />
    <path d="M1.800 5.200 6 12.300q1.300 2.200 4 2.200h1.500l-3 5A9.500 9.500 0 0 1 1.800 5.200z" fill="#1fa15a" />
    <circle cx="10" cy="10" r="4.600" fill="#fff" />
    <circle cx="10" cy="10" r="3.600" fill="#4a88ee" />
  </Svg>
);

const SqlToolsIcon = () => (
  <Svg className="h-[22px] w-[22px]" box="0 0 22 22">
    <path d="M1 3v11q5.500 3 11 0V3z" fill="#f1b82d" />
    <ellipse cx="6.500" cy="3" rx="5.500" ry="2.200" fill="#fff3cf" />
    <path d="M16 1.500h5V7M1 16v5h6" stroke="#4e9152" strokeWidth="2" />
    <path d="M9 12l9 9M18 13l-8 8" stroke="#b9b9b9" strokeWidth="1.800" />
    <circle cx="18.500" cy="12.500" r="2.200" stroke="#b9b9b9" strokeWidth="1.500" />
  </Svg>
);

const OutlookIcon = () => (
  <Svg className="h-5 w-5" box="0 0 20 20">
    <path d="M10 4h9.500v11H10z" fill="#fff" stroke="#1273c6" />
    <path d="M11 7l3 3.500 5.500-5.500" stroke="#1273c6" strokeWidth="1.500" />
    <path d="M.5 2.500 11.500.500v19l-11-2z" fill="#0a72c8" />
    <ellipse cx="6" cy="10" rx="2.300" ry="2.900" stroke="#fff" strokeWidth="1.600" />
  </Svg>
);

const EightIcon = () => (
  <Svg className="h-[22px] w-[22px]" box="0 0 22 22">
    <circle cx="11" cy="11" r="11" fill="#fff" />
    <text x="11" y="14.500" fontSize="10" fontWeight="900" textAnchor="middle" fill="#e01b22">8x8</text>
  </Svg>
);

const WordIcon = () => (
  <Svg className="h-5 w-5" box="0 0 20 20">
    <path d="M10 3h9.500v14H10z" fill="#fff" stroke="#2b579a" />
    <path d="M12 6h6M12 8.500h6M12 11h6M12 13.500h6" stroke="#2b579a" />
    <path d="M.5 2.500 11.500.500v19l-11-2z" fill="#2b579a" />
    <text x="6" y="13.500" fontSize="9" fontWeight="700" textAnchor="middle" fill="#fff">W</text>
  </Svg>
);

const DbIcon = () => (
  <Svg className="h-[22px] w-[22px]" box="0 0 22 22">
    <path d="M.5.500h21v16H.5z" fill="#d4d0c8" stroke="#eee" />
    <path d="M3.500 3h15v11h-15z" fill="#0000e0" stroke="#444" />
    <text x="11" y="11.500" fontSize="8" textAnchor="middle" fill="#ffe94a" fontFamily="Liberation Mono">DB</text>
    <path d="M5 17h12v2H5zM1 19h20v2.500H1z" fill="#d4d0c8" stroke="#555" strokeWidth=".5" />
  </Svg>
);

const apps = [
  { label: "Edge", icon: <EdgeIcon /> },
  { label: "File Explorer", icon: <ExplorerIcon />, open: true },
  { label: "Firefox", icon: <FirefoxIcon /> },
  { label: "Chrome", icon: <ChromeIcon />, open: true },
  { label: "SQL tools", icon: <SqlToolsIcon />, open: true },
  { label: "Outlook", icon: <OutlookIcon />, open: true },
  { label: "8x8", icon: <EightIcon />, open: true },
  { label: "Word", icon: <WordIcon />, open: true },
  { label: "DB", icon: <DbIcon />, open: true },
  { label: "ClearVantage", icon: <CvLogo className="h-[21px] w-[21px]" label />, open: true, active: true },
];

function Taskbar() {
  return (
    <div className="flex h-9 items-stretch bg-[#0a1218] text-white">
      <button aria-label="Start" className="flex w-[43px] items-center justify-center">
        <Svg className="h-[15px] w-[15px]" box="0 0 15 15">
          <path d="M0 2l6.500-1v6H0zM7.500 1 15 0v7H7.500zM0 8h6.500v6L0 13zM7.500 8H15v7l-7.500-1z" fill="#fff" />
        </Svg>
      </button>
      <div className="flex w-[308px] items-center bg-[#333] pr-[11px] pl-2">
        <div className="h-[19px] w-[19px] rounded-full border-[3px] border-white" />
        <input
          type="text"
          aria-label="Search"
          placeholder="Type here to search"
          className="min-w-0 flex-1 pt-px pl-[9px] text-xs placeholder:text-[#a3a3a3] focus:outline-none"
        />
        <Mic className="h-[15px] w-[15px] text-[#ccc]" />
      </div>
      <button aria-label="Task view" className="flex w-[45px] items-center justify-center">
        <Svg className="h-[14px] w-[17px]" box="0 0 17 14">
          <path d="M3.500.500h10v13h-10zM2 2.500H.5v9H2M15 2.500h1.500v9H15" stroke="#ddd" />
        </Svg>
      </button>
      {apps.map(({ label, icon, open, active }) => (
        <button
          key={label}
          aria-label={label}
          className={clsx("flex flex-col items-center", active ? "w-11 bg-[#3d4247]" : "-mr-px w-[45px] odd:mr-0")}
        >
          <span className="flex flex-1 items-center pt-0.5">{icon}</span>
          <span className={clsx("h-[3px]", open && "bg-[#76b9ed]", active ? "w-full" : "w-[37px]")} />
        </button>
      ))}
      <div className="ml-auto flex items-center pr-[3px]">
        <Svg className="h-[7px] w-[11px]" box="0 0 11 7">
          <path d="M.5 6.500l5-5 5 5" stroke="#eee" strokeWidth="1.200" />
        </Svg>
        <Svg className="ml-[17px] h-[10px] w-[14px]" box="0 0 14 10">
          <path d="M3 2.500h10v6H3z" stroke="#ddd" />
          <path d="M4 4h4v4H4zM0 0h1v2H0zM3 0h1v2H3zM0 2h4v2.500L2.500 5.500V8h-1V5.500L0 4.500z" fill="#fff" />
        </Svg>
        <Svg className="ml-4 h-[13px] w-[13px]" box="0 0 13 13">
          <path d="M1 12Q1 1.500 12 1.500" stroke="#777" />
          <path d="M3.500 12Q4 4.500 12 4.500M6.500 12Q7 7.500 12 7.500" stroke="#ddd" />
          <path d="M9 12.500 12 9.500v3z" fill="#ddd" />
        </Svg>
        <Svg className="ml-[15px] h-[13px] w-[15px]" box="0 0 15 13">
          <path d="M.5 4.500H3l3-3v10l-3-3H.5z" stroke="#eee" />
          <path d="M8 5q1 1.500 0 3" stroke="#eee" />
          <path d="M10 3q3 3.500 0 7M12 1.500q4 5 0 10" stroke="#888" />
        </Svg>
        <Svg className="ml-[14px] h-[13px] w-[21px]" box="0 0 21 13">
          <path d="M.5.500h20v12H.5z" stroke="#ddd" />
          <path d="M3 4h15M3 6.500h15" stroke="#ddd" strokeDasharray="1.500 1" />
          <path d="M3 9.500h2M6 9.500h9M16 9.500h2" stroke="#ddd" />
        </Svg>
        <div className="ml-2 w-[60px] pt-0.5 text-center text-[11px] leading-4">
          <div>11:23 AM</div>
          <div>11/10/2017</div>
        </div>
        <Svg className="ml-2.5 h-[14px] w-[15px]" box="0 0 15 14">
          <path d="M.5.500h14v10H10L7.500 13 5 10.500H.5z" stroke="#eee" />
        </Svg>
        <div className="ml-[17px] h-9 w-px bg-[#444]" />
      </div>
    </div>
  );
}

export default function App() {
  return (
    <div className="relative flex h-screen flex-col overflow-hidden bg-gradient-to-b from-[#3d86cf] via-[#7fb4e0] to-[#5fa9c4] font-[Roboto,'Noto_Sans',sans-serif]">
      <main className="mt-0.5 ml-0.5 flex min-h-0 flex-1 flex-col border-r border-[#9a9a9a]">
        <WordTitleBar />
        <WordTabRow />
        <WordRibbon />
        <WordDocument />
        <WordStatusBar />
      </main>
      <Taskbar />
      <ClearVantageWindow />
    </div>
  );
}
